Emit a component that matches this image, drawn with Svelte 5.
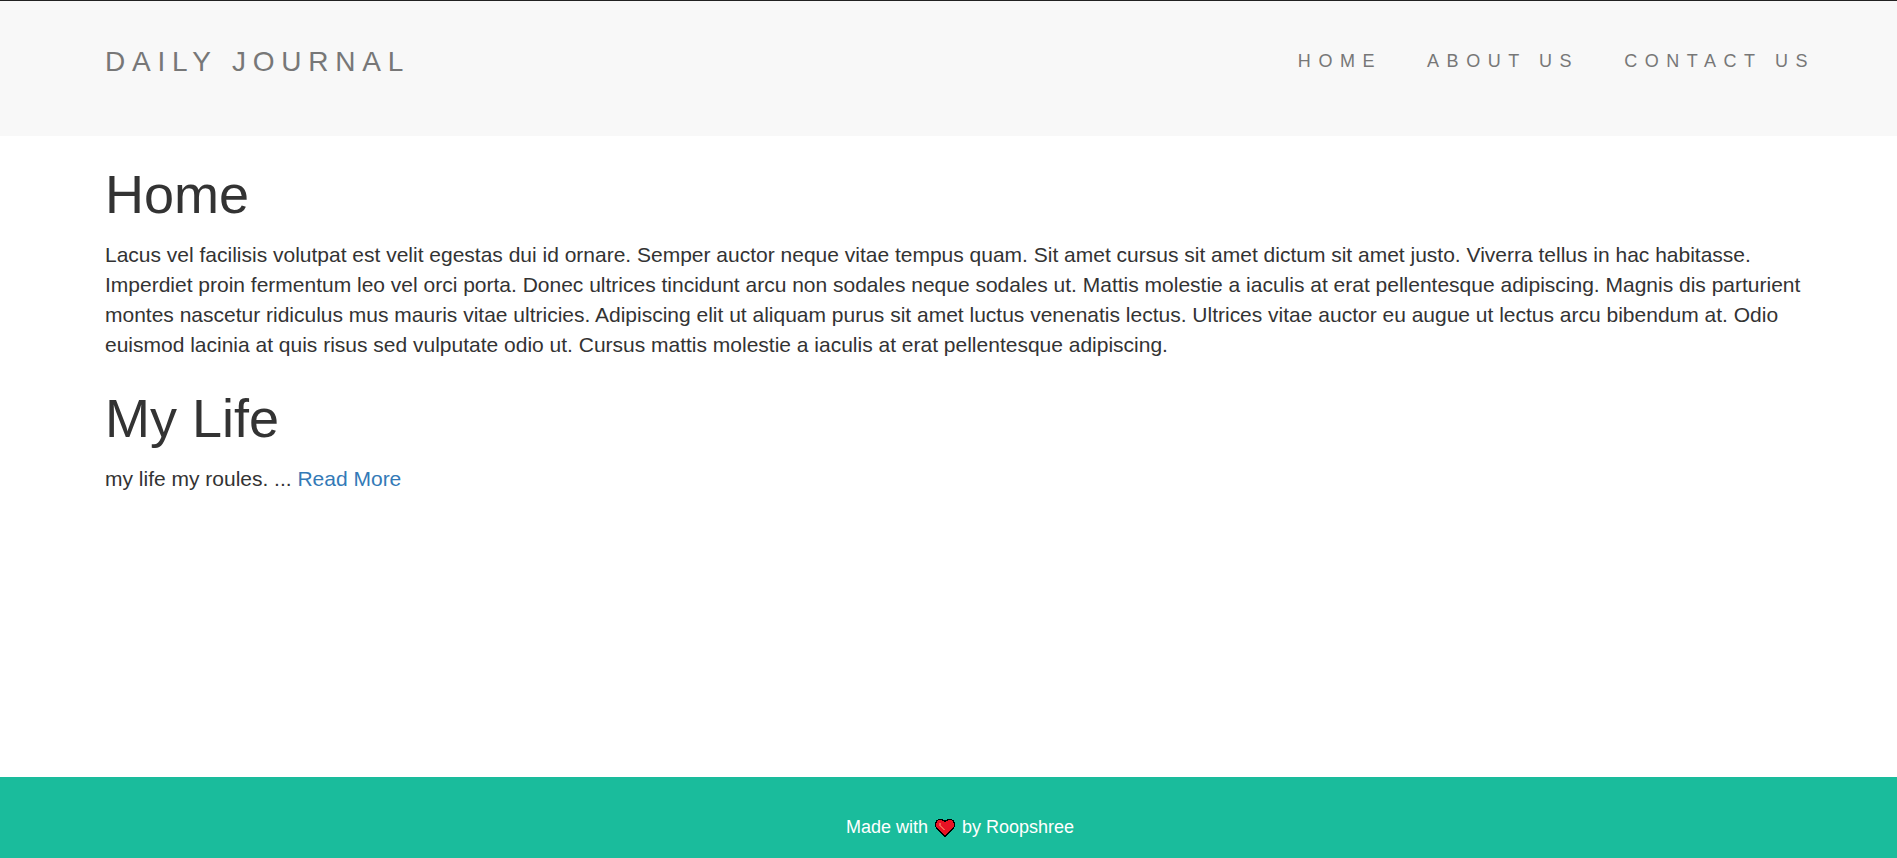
<script>
  const links = ['Home', 'About us', 'Contact us'];
</script>

<div class="page">
  <nav>
    <p class="brand">DAILY JOURNAL</p>
    <ul>{#each links as l}<li>{l}</li>{/each}</ul>
  </nav>
  <main>
    <h1>Home</h1>
    <p>Lacus vel facilisis volutpat est velit egestas dui id ornare. Semper auctor neque vitae tempus quam. Sit amet cursus sit amet dictum sit amet justo. Viverra tellus in hac habitasse. Imperdiet proin fermentum leo vel orci porta. Donec ultrices tincidunt arcu non sodales neque sodales ut. Mattis molestie a iaculis at erat pellentesque adipiscing. Magnis dis parturient montes nascetur ridiculus mus mauris vitae ultricies. Adipiscing elit ut aliquam purus sit amet luctus venenatis lectus. Ultrices vitae auctor eu augue ut lectus arcu bibendum at. Odio euismod lacinia at quis risus sed vulputate odio ut. Cursus mattis molestie a iaculis at erat pellentesque adipiscing.</p>
    <h1>My Life</h1>
    <p>my life my roules. ... <a href="#more">Read More</a></p>
  </main>
  <footer>
    <span>Made with</span>
    <svg width="20" height="18" viewBox="0 0 20 18" shape-rendering="crispEdges">
      <path d="M3 0H8V1H12V0H17V1H19V3H20V8H19V10H18V11H17V12H16V13H15V14H14V15H13V16H12V17H11V18H9V17H8V16H7V15H6V14H5V13H4V12H3V11H2V10H1V8H0V3H1V1H3Z" fill="#000"/>
      <path d="M3 1H7V2H9V3H11V2H13V1H17V2H18V4H19V8H18V9H17V10H16V11H15V12H14V13H13V14H12V15H11V16H9V15H8V14H7V13H6V12H5V11H4V10H3V9H2V8H1V4H2V2H3Z" fill="#e81224"/>
      <path d="M4 4H6V7H7V8H8V9H9V10H10V11H8V10H7V9H6V8H5V7H4Z" fill="#f9604f"/>
    </svg>
    <span>by Roopshree</span>
  </footer>
</div>

<style>
  :global(body) { margin: 0; }
  .page { height: 858px; display: flex; flex-direction: column; font-family: "Liberation Sans", Arial, sans-serif; font-size: 21px; line-height: 30px; color: #333; box-sizing: border-box; }
  nav { box-sizing: border-box; height: 136px; border-top: 1px solid #222; background: #f8f8f8; color: #777; display: flex; justify-content: space-between; padding: 46px 82px 0 105px; }
  .brand { margin: 0; font-size: 28px; letter-spacing: 6.8px; }
  ul { list-style: none; margin: 0; padding: 0; display: flex; gap: 45px; }
  li { font-size: 18px; letter-spacing: 7.55px; text-transform: uppercase; line-height: 29px; }
  main { flex: 1; padding: 29px 85px 0 105px; }
  h1 { margin: 0 0 16px; font-size: 54px; line-height: 59px; font-weight: 400; color: #333; }
  p { margin: 0 0 29px; letter-spacing: -0.004px; }
  a { color: #337ab7; text-decoration: none; }
  footer { box-sizing: border-box; height: 81px; background: #1abc9c; color: #fff; display: flex; justify-content: center; gap: 7px; padding: 35px 0 0 23px; font-size: 18px; }
  svg { margin-top: 7px; }
</style>
